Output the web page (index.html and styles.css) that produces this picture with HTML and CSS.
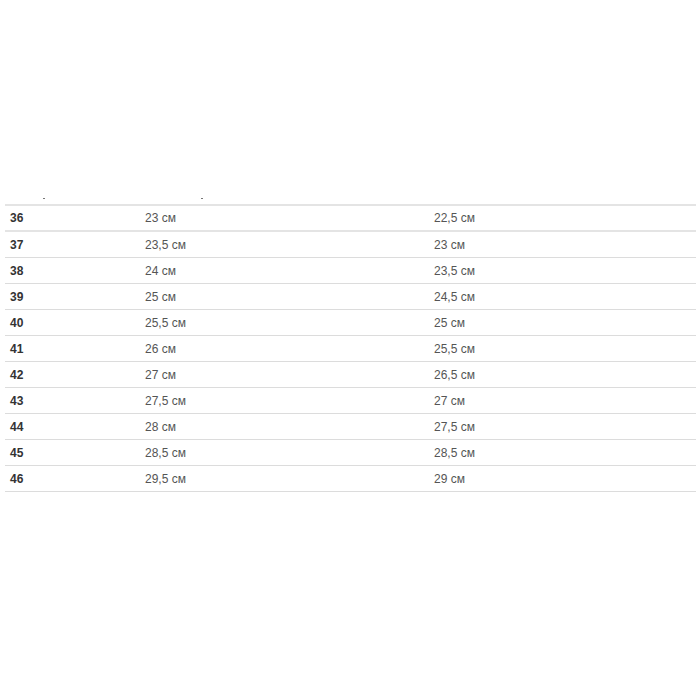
FILE: index.html
```html
<!DOCTYPE html>
<html>
<head>
<meta charset="utf-8">
<link rel="stylesheet" href="styles.css">
</head>
<body>
<div class="page">
  <table class="sizes">
    <colgroup>
      <col class="c1"><col class="c2"><col class="c3">
    </colgroup>
    <thead>
      <tr class="head"><th><span class="mark m1"></span></th><th><span class="mark m2"></span></th><th></th></tr>
    </thead>
    <tbody>
      <tr><td class="size">36</td><td>23 см</td><td>22,5 см</td></tr>
      <tr><td class="size">37</td><td>23,5 см</td><td>23 см</td></tr>
      <tr><td class="size">38</td><td>24 см</td><td>23,5 см</td></tr>
      <tr><td class="size">39</td><td>25 см</td><td>24,5 см</td></tr>
      <tr><td class="size">40</td><td>25,5 см</td><td>25 см</td></tr>
      <tr><td class="size">41</td><td>26 см</td><td>25,5 см</td></tr>
      <tr><td class="size">42</td><td>27 см</td><td>26,5 см</td></tr>
      <tr><td class="size">43</td><td>27,5 см</td><td>27 см</td></tr>
      <tr><td class="size">44</td><td>28 см</td><td>27,5 см</td></tr>
      <tr><td class="size">45</td><td>28,5 см</td><td>28,5 см</td></tr>
      <tr><td class="size">46</td><td>29,5 см</td><td>29 см</td></tr>
    </tbody>
  </table>
</div>
</body>
</html>
```
FILE: styles.css
```css
html, body {
  margin: 0;
  padding: 0;
  background: #fff;
}
.page {
  padding: 194px 4px 0 5px;
}
.sizes {
  width: 691px;
  border-collapse: collapse;
  font-family: "Liberation Sans", Arial, sans-serif;
  font-size: 12px;
  color: #555;
}
.c1 { width: 135px; }
.c2 { width: 289px; }
.c3 { width: 267px; }
.head th {
  height: 10px;
  padding: 0;
  text-align: left;
  vertical-align: top;
  border-bottom: 2px solid #e4e4e4;
  position: relative;
}
.mark {
  position: absolute;
  top: 4px;
  height: 1px;
  width: 2px;
  background: #777;
}
.m1 { left: 38px; }
.m2 { left: 61px; }
.sizes td {
  height: 25px;
  padding: 0 5px;
  border-bottom: 1px solid #dcdcdc;
  vertical-align: middle;
  text-align: left;
}
.sizes tbody tr:first-child td {
  border-bottom-width: 2px;
  border-bottom-color: #e4e4e4;
  height: 24px;
}
.size {
  font-weight: bold;
  color: #333;
}
```
